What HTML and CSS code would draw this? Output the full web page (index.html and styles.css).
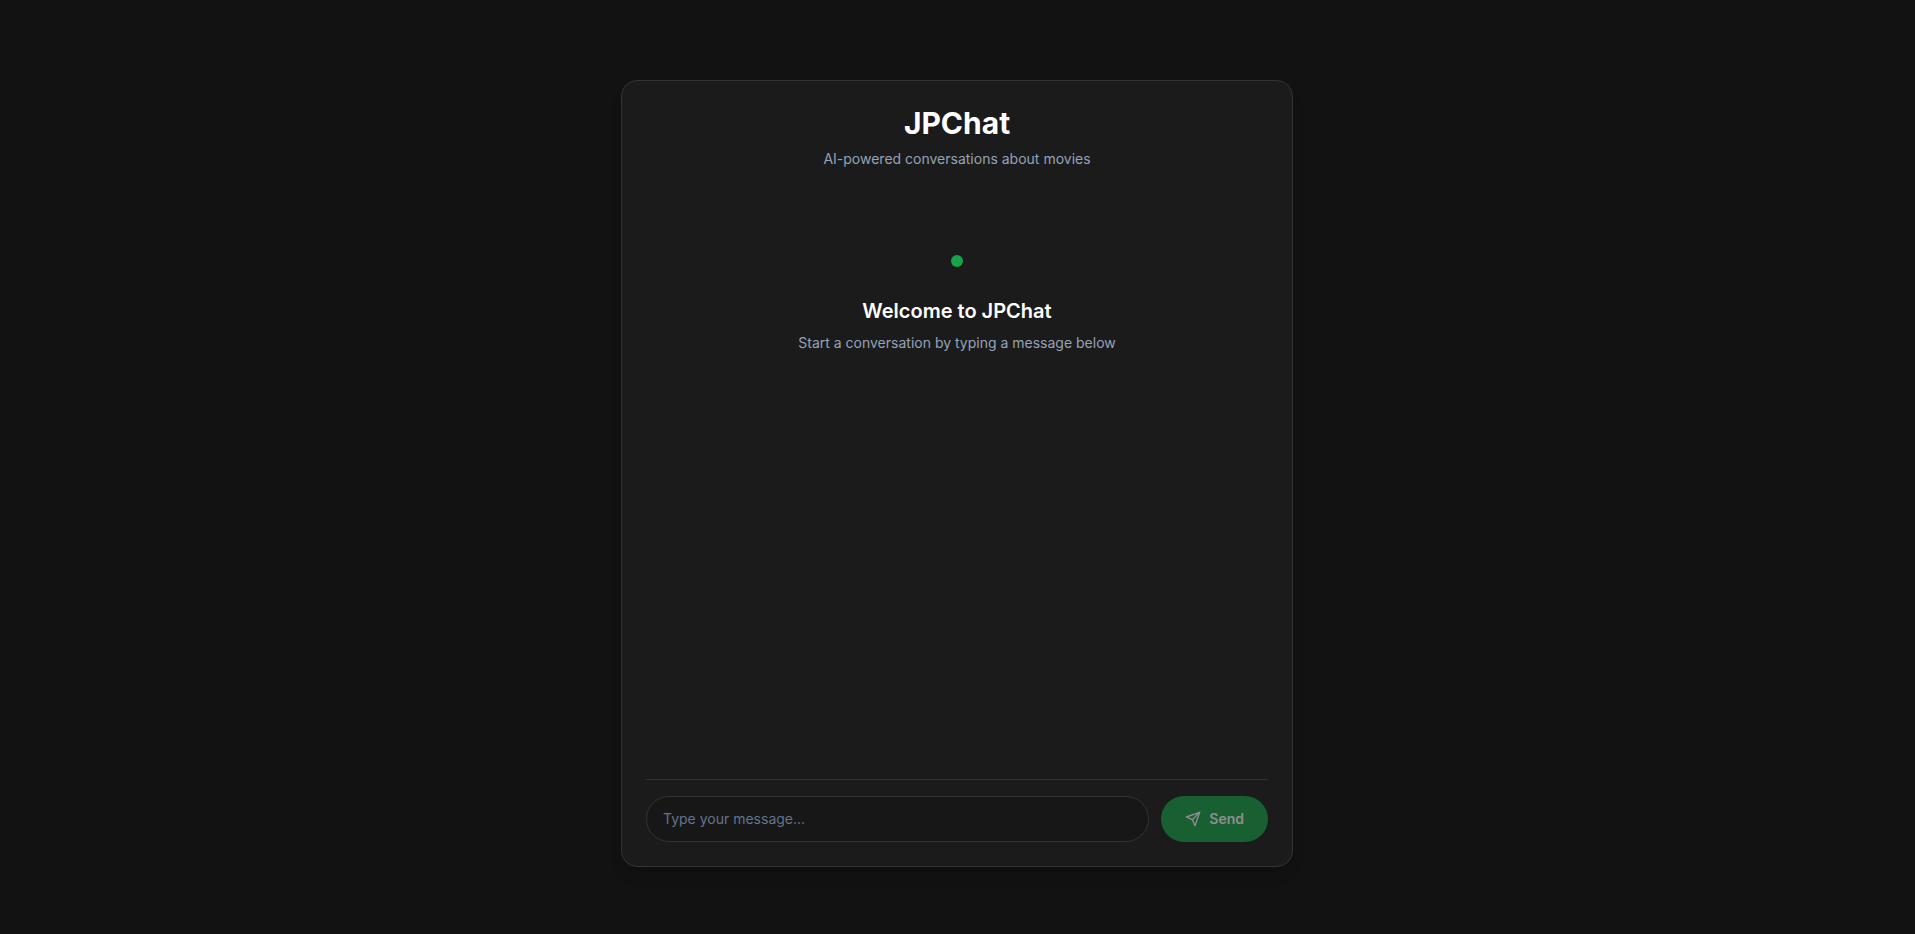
FILE: index.html
```html
<!DOCTYPE html>
<html lang="en">
<head>
<meta charset="utf-8">
<meta name="viewport" content="width=device-width, initial-scale=1">
<title>JPChat</title>
<link rel="stylesheet" href="styles.css">
</head>
<body>
<main class="chat">
  <header class="chat-header">
    <h1 class="chat-title">JPChat</h1>
    <p class="muted">AI-powered conversations about movies</p>
  </header>
  <section class="messages">
    <span class="status-dot"></span>
    <h2 class="welcome-title">Welcome to JPChat</h2>
    <p class="muted">Start a conversation by typing a message below</p>
  </section>
  <form class="composer">
    <input class="message-input" type="text" placeholder="Type your message..." aria-label="Message">
    <button class="send-button" type="submit" disabled>
      <svg class="send-icon" viewBox="0 0 24 24" aria-hidden="true"><path d="m22 2-7 20-4-9-9-4Z"/><path d="M22 2 11 13"/></svg>
      Send
    </button>
  </form>
</main>
</body>
</html>
```
FILE: styles.css
```css
* {
  box-sizing: border-box;
  margin: 0;
}

body {
  display: flex;
  justify-content: center;
  min-height: 100vh;
  padding: 80px 17px 67px 16px;
  background: #121212;
  color: #fff;
  font: 14px/20px Inter, sans-serif;
}

.chat {
  display: flex;
  flex-direction: column;
  width: 100%;
  max-width: 672px;
  padding: 24px;
  border: 1px solid #333;
  border-radius: 16px;
  background: #1b1b1b;
  box-shadow: 0 10px 15px -3px rgb(0 0 0 / 10%), 0 4px 6px -4px rgb(0 0 0 / 10%);
}

.chat-header {
  text-align: center;
}

.chat-title {
  margin-bottom: 8px;
  font-size: 30px;
  line-height: 36px;
  font-weight: 700;
}

.muted {
  color: #94a3b8;
}

.messages {
  display: flex;
  flex: 1;
  flex-direction: column;
  align-items: center;
  padding: 86px 16px 16px;
  text-align: center;
}

.status-dot {
  width: 12px;
  height: 12px;
  margin-bottom: 30px;
  border-radius: 50%;
  background: #16a34a;
}

.welcome-title {
  margin-bottom: 8px;
  font-size: 20px;
  line-height: 28px;
  font-weight: 600;
}

.composer {
  display: flex;
  gap: 12px;
  padding-top: 16px;
  border-top: 1px solid #333;
}

.message-input {
  flex: 1;
  min-width: 0;
  padding: 12px 16px;
  border: 1px solid #333;
  border-radius: 24px;
  background: #171717;
  color: #fff;
  font: inherit;
}

.message-input::placeholder {
  color: #64748b;
}

.send-button {
  display: flex;
  align-items: center;
  gap: 8px;
  padding: 12px 24px;
  border: 0;
  border-radius: 24px;
  background: #16a34a;
  color: #fff;
  font: inherit;
  font-weight: 600;
  opacity: 0.5;
}

.send-icon {
  width: 16px;
  height: 16px;
  fill: none;
  stroke: currentColor;
  stroke-width: 2;
  stroke-linecap: round;
  stroke-linejoin: round;
}
```
